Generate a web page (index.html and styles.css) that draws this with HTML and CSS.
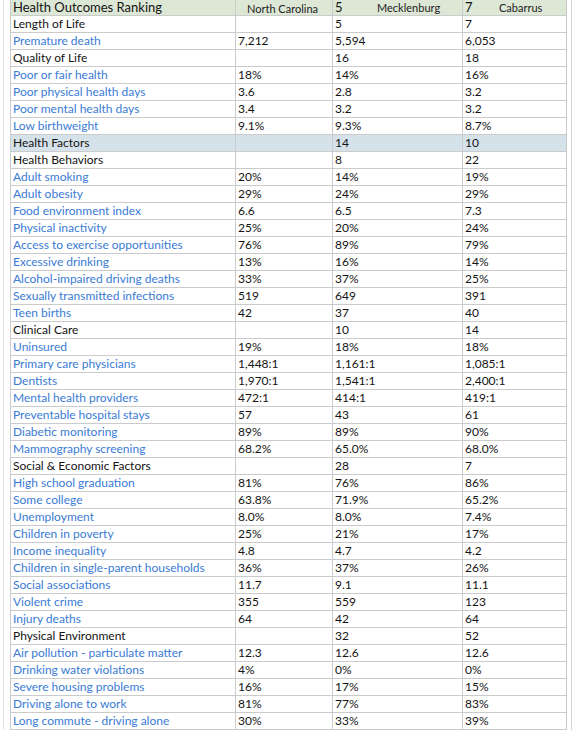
FILE: index.html
```html
<!DOCTYPE html>
<html lang="en">
<head>
<meta charset="utf-8">
<title>Health Outcomes Ranking</title>
<link rel="stylesheet" href="styles.css">
</head>
<body>
<div class="frame">
<table class="rank">
<colgroup><col class="c1"><col class="c2"><col class="c3"><col class="c4"></colgroup>
<thead>
<tr class="head">
<th class="title">Health Outcomes Ranking</th>
<th class="state"><span class="hname">North Carolina</span></th>
<th><div class="hcell"><span class="hnum">5</span><span class="hname mk">Mecklenburg</span></div></th>
<th><div class="hcell"><span class="hnum">7</span><span class="hname cb">Cabarrus</span></div></th>
</tr>
</thead>
<tbody>
<tr class="sec"><td>Length of Life</td><td></td><td>5</td><td>7</td></tr>
<tr><td class="m">Premature death</td><td>7,212</td><td>5,594</td><td>6,053</td></tr>
<tr class="sec"><td>Quality of Life</td><td></td><td>16</td><td>18</td></tr>
<tr><td class="m">Poor or fair health</td><td>18%</td><td>14%</td><td>16%</td></tr>
<tr><td class="m">Poor physical health days</td><td>3.6</td><td>2.8</td><td>3.2</td></tr>
<tr><td class="m">Poor mental health days</td><td>3.4</td><td>3.2</td><td>3.2</td></tr>
<tr><td class="m">Low birthweight</td><td>9.1%</td><td>9.3%</td><td>8.7%</td></tr>
<tr class="hl"><td>Health Factors</td><td></td><td>14</td><td>10</td></tr>
<tr class="sec"><td>Health Behaviors</td><td></td><td>8</td><td>22</td></tr>
<tr><td class="m">Adult smoking</td><td>20%</td><td>14%</td><td>19%</td></tr>
<tr><td class="m">Adult obesity</td><td>29%</td><td>24%</td><td>29%</td></tr>
<tr><td class="m">Food environment index</td><td>6.6</td><td>6.5</td><td>7.3</td></tr>
<tr><td class="m">Physical inactivity</td><td>25%</td><td>20%</td><td>24%</td></tr>
<tr><td class="m">Access to exercise opportunities</td><td>76%</td><td>89%</td><td>79%</td></tr>
<tr><td class="m">Excessive drinking</td><td>13%</td><td>16%</td><td>14%</td></tr>
<tr><td class="m">Alcohol-impaired driving deaths</td><td>33%</td><td>37%</td><td>25%</td></tr>
<tr><td class="m">Sexually transmitted infections</td><td>519</td><td>649</td><td>391</td></tr>
<tr><td class="m">Teen births</td><td>42</td><td>37</td><td>40</td></tr>
<tr class="sec"><td>Clinical Care</td><td></td><td>10</td><td>14</td></tr>
<tr><td class="m">Uninsured</td><td>19%</td><td>18%</td><td>18%</td></tr>
<tr><td class="m">Primary care physicians</td><td>1,448:1</td><td>1,161:1</td><td>1,085:1</td></tr>
<tr><td class="m">Dentists</td><td>1,970:1</td><td>1,541:1</td><td>2,400:1</td></tr>
<tr><td class="m">Mental health providers</td><td>472:1</td><td>414:1</td><td>419:1</td></tr>
<tr><td class="m">Preventable hospital stays</td><td>57</td><td>43</td><td>61</td></tr>
<tr><td class="m">Diabetic monitoring</td><td>89%</td><td>89%</td><td>90%</td></tr>
<tr><td class="m">Mammography screening</td><td>68.2%</td><td>65.0%</td><td>68.0%</td></tr>
<tr class="sec"><td>Social &amp; Economic Factors</td><td></td><td>28</td><td>7</td></tr>
<tr><td class="m">High school graduation</td><td>81%</td><td>76%</td><td>86%</td></tr>
<tr><td class="m">Some college</td><td>63.8%</td><td>71.9%</td><td>65.2%</td></tr>
<tr><td class="m">Unemployment</td><td>8.0%</td><td>8.0%</td><td>7.4%</td></tr>
<tr><td class="m">Children in poverty</td><td>25%</td><td>21%</td><td>17%</td></tr>
<tr><td class="m">Income inequality</td><td>4.8</td><td>4.7</td><td>4.2</td></tr>
<tr><td class="m">Children in single-parent households</td><td>36%</td><td>37%</td><td>26%</td></tr>
<tr><td class="m">Social associations</td><td>11.7</td><td>9.1</td><td>11.1</td></tr>
<tr><td class="m">Violent crime</td><td>355</td><td>559</td><td>123</td></tr>
<tr><td class="m">Injury deaths</td><td>64</td><td>42</td><td>64</td></tr>
<tr class="sec"><td>Physical Environment</td><td></td><td>32</td><td>52</td></tr>
<tr><td class="m">Air pollution - particulate matter</td><td>12.3</td><td>12.6</td><td>12.6</td></tr>
<tr><td class="m">Drinking water violations</td><td>4%</td><td>0%</td><td>0%</td></tr>
<tr><td class="m">Severe housing problems</td><td>16%</td><td>17%</td><td>15%</td></tr>
<tr><td class="m">Driving alone to work</td><td>81%</td><td>77%</td><td>83%</td></tr>
<tr><td class="m">Long commute - driving alone</td><td>30%</td><td>33%</td><td>39%</td></tr>
</tbody>
</table>
</div>
</body>
</html>
```
FILE: styles.css
```css
html, body {
  margin: 0;
  padding: 0;
  background: #ffffff;
}

body {
  font-family: Lato, "Open Sans", "Liberation Sans", sans-serif;
  color: #141414;
}

.frame {
  margin-left: 3px;
  width: 569px;
  border-left: 1px solid #e2e2e2;
  border-right: 1px solid #d4d4d4;
  padding-left: 6px;
  box-sizing: border-box;
  height: 730px;
  overflow: hidden;
}

.rank {
  border-collapse: collapse;
  table-layout: fixed;
  width: 556px;
}

.c1 { width: 225px; }
.c2 { width: 97px; }
.c3 { width: 130px; }
.c4 { width: 104px; }

.rank td {
  border: 1px solid #cbcbcb;
  padding: 0 0 0 2px;
  height: 16px;
  line-height: 16px;
  font-size: 12px;
  white-space: nowrap;
  overflow: hidden;
  vertical-align: middle;
}

.rank td.m {
  color: #3a7bd5;
}

.head th {
  background: #dde7d5;
  border-left: 1px solid #cbcbcb;
  border-right: 1px solid #cbcbcb;
  border-bottom: 1px solid #cbcbcb;
  padding: 0 0 0 2px;
  height: 13px;
  line-height: 13px;
  font-weight: normal;
  text-align: left;
  white-space: nowrap;
  overflow: hidden;
  vertical-align: middle;
}

.head th.title {
  font-size: 13px;
}

.hcell {
  display: flex;
  align-items: center;
}

.hnum {
  font-size: 13px;
  width: 10px;
}

.hname {
  font-size: 11px;
  color: #222;
}

.state .hname {
  padding-left: 9px;
}

.hname.mk {
  padding-left: 32px;
}

.hname.cb {
  padding-left: 24px;
}

.rank tr.hl td {
  background: #d6e2ea;
}
```
